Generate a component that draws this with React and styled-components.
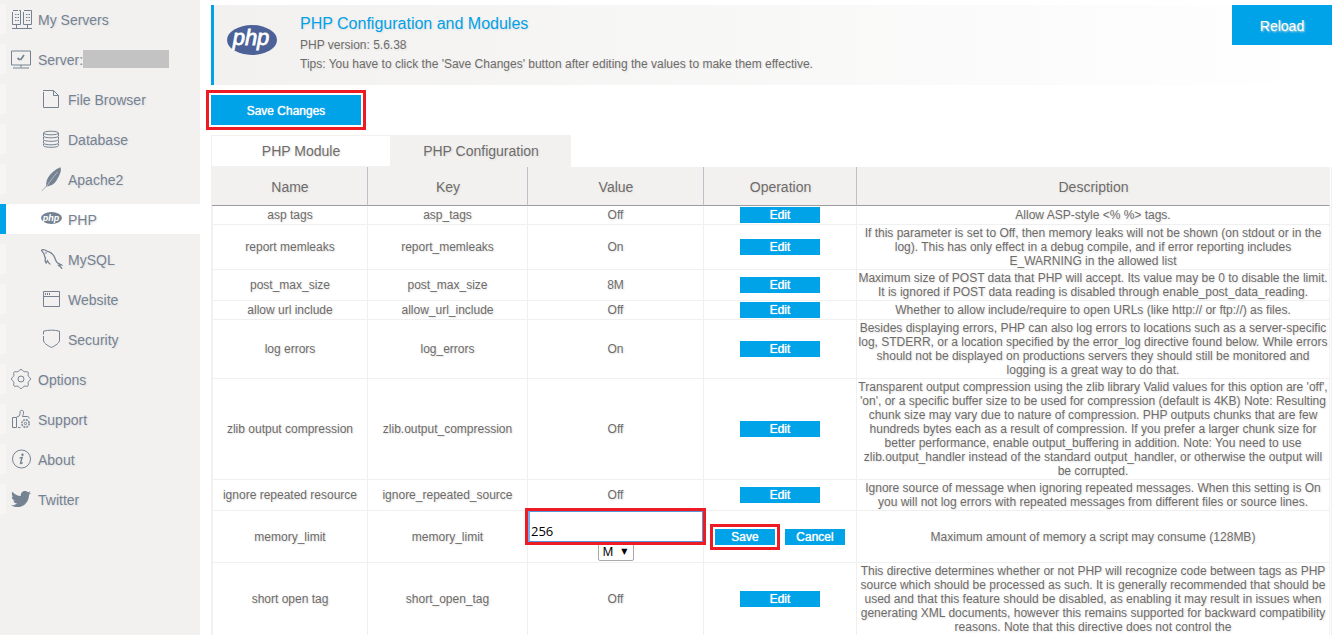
import styled, { createGlobalStyle, css } from "styled-components";
import { useState } from "react";
import { FaTwitter } from "react-icons/fa";

const GlobalStyle = createGlobalStyle`
  * {
    box-sizing: border-box;
  }

  body {
    margin: 0;
    background: #ffffff;
    color: #6e6c69;
    font-family: "Liberation Sans", Arial, sans-serif;
    font-size: 12px;
    line-height: 14px;
    text-shadow: 1px 1px 2px #dddddd;
  }

  button,
  input,
  select {
    margin: 0;
    font-family: inherit;
  }
`;

const highlight = css`
  outline: 3px solid #ed1c24;
  outline-offset: ${({ $tight }) => ($tight ? "0" : "2px")};
`;

const Page = styled.div`
  display: flex;
  height: 100vh;
  overflow: hidden;
`;

const Side = {
  Nav: styled.nav`
    flex: 0 0 200px;
    background: #f2f1f0;
  `,
  List: styled.ul`
    display: flex;
    flex-direction: column;
    gap: 10px;
    margin: 0;
    padding: 4px 0;
    list-style: none;
  `,
  Link: styled.a`
    display: flex;
    align-items: center;
    gap: 7px;
    height: 30px;
    padding-left: ${({ $sub }) => ($sub ? "35px" : "5px")};
    border-left: 6px solid ${({ $active }) => ($active ? "#00a2e8" : "#f6f5f4")};
    background: ${({ $active }) => ($active ? "#ffffff" : "transparent")};
    color: #758292;
    font-size: 14px;
    line-height: 16px;
    text-decoration: none;

    svg {
      flex: none;
      overflow: visible;
      text-shadow: none;
    }
  `,
  Label: styled.span`
    display: flex;
    align-items: center;
    padding-top: 2px;
  `,
  Redacted: styled.span`
    width: 86px;
    height: 18px;
    margin-bottom: 2px;
    background: #c3c3c3;
  `,
};

const Main = styled.main`
  flex: 1;
  min-width: 0;
  padding: 5px 9px 0 11px;
`;

const Banner = {
  Box: styled.header`
    display: flex;
    align-items: flex-start;
    min-height: 80px;
    border-left: 3px solid #00a2e8;
    background: linear-gradient(to right, #f2f1f0, #ffffff);
  `,
  Logo: styled.div`
    display: flex;
    padding: 20px 23px 0 13px;
    text-shadow: none;
  `,
  Text: styled.div`
    flex: 1;

    p {
      margin: 0;
      padding-bottom: 5px;
    }
  `,
  Title: styled.h1`
    margin: 0;
    padding: 9px 0 4px;
    color: #00a2e8;
    font-size: 16px;
    font-weight: 400;
    line-height: 20px;
  `,
};

const Button = styled.button`
  display: block;
  padding: 0;
  border: 0;
  background: #00a2e8;
  color: #ffffff;
  font-size: 12px;
  line-height: 16px;
  text-shadow: 0 0 1px #ffffff;
  cursor: pointer;
`;

const ReloadButton = styled(Button)`
  width: 100px;
  height: 40px;
  padding-top: 2px;
  font-size: 14px;
  text-shadow: 1px 1px 2px #dddddd;
`;

const SaveChangesButton = styled(Button)`
  width: 150px;
  height: 30px;
  margin: 10px 0;
  padding-top: 2px;
  ${highlight}
`;

const RowButton = styled(Button)`
  width: ${({ $small }) => ($small ? "60px" : "80px")};
  height: 16px;
  ${({ $marked }) => $marked && highlight}
`;

const Tabs = styled.div`
  display: flex;
`;

const Tab = styled.button`
  width: 180px;
  height: 32px;
  padding: 0;
  border: 1px solid #f2f1f0;
  background: ${({ $active }) => ($active ? "#f2f1f0" : "#ffffff")};
  color: inherit;
  font-size: 14px;
  text-shadow: inherit;
  cursor: pointer;
`;

const Table = {
  Wrap: styled.div`
    padding-right: 1px;
    border: solid #f2f1f0;
    border-width: 0 1px;
  `,
  Table: styled.table`
    width: 100%;
    border-spacing: 0;
    table-layout: fixed;
    text-align: center;
  `,
  Col: styled.col`
    width: ${({ $width }) => $width};
  `,
  Head: styled.th`
    height: 39px;
    padding: 2px 0 0 1px;
    border-right: 1px solid ${({ $last }) => ($last ? "#f2f1f0" : "#c0bfc8")};
    border-bottom: 1px solid #9c9ca4;
    background: #f2f1f0;
    font-size: 14px;
    font-weight: 400;
  `,
  Cell: styled.td`
    padding: ${({ $flush }) => ($flush ? "0 0 1px" : "1px")};
    border-right: 1px solid #f0f0f0;
    border-bottom: 1px solid #f0f0f0;

    &:first-child {
      border-left: 1px solid #f0f0f0;
    }
  `,
  Actions: styled.div`
    display: flex;
    justify-content: center;
    gap: 10px;
  `,
};

const Editor = {
  Box: styled.div`
    display: flex;
    flex-direction: column;
    align-items: center;
    font-family: "Noto Sans", sans-serif;
  `,
  Input: styled.input`
    position: relative;
    width: 100%;
    height: 31px;
    padding: 8px 1px 0;
    border: 1px solid #5794da;
    border-left: 2px solid #74aef0;
    background: #ffffff;
    color: #000000;
    font-family: "Open Sans", sans-serif;
    font-size: 13px;
    ${highlight}
  `,
  Unit: styled.div`
    display: grid;
    align-items: center;
    width: 36px;
    height: 19px;

    > * {
      grid-area: 1 / 1;
    }
  `,
  Select: styled.select`
    width: 100%;
    height: 19px;
    padding: 0 0 0 4px;
    border: 1px solid #a9a9a9;
    border-radius: 2px;
    background: #ffffff;
    color: #000000;
    font-size: 12px;
    line-height: 16px;
    appearance: none;
  `,
  Arrow: styled.span`
    justify-self: end;
    padding-right: 6px;
    color: #000000;
    font-family: "DejaVu Sans", sans-serif;
    font-size: 8px;
    text-shadow: none;
    pointer-events: none;
  `,
};

function Icon({ width = 20, height = 20, children }) {
  return (
    <svg
      width={width}
      height={height}
      viewBox={`0 0 ${width} ${height}`}
      fill="none"
      stroke="currentColor"
      aria-hidden="true"
    >
      {children}
    </svg>
  );
}

const ServersIcon = () => (
  <Icon>
    <path d="M2 1.500h5M8 1.500h1.500v14M1.500 3v12.500h8M13 1.500h7.500v14M12.500 3v12.500h8M5.500 16v3M16.500 16v3M1 19.500h20" />
    <path d="M4 5.500h4M4 8.500h4M4 11.500h4M15 5.500h4M15 8.500h4M15 11.500h4" strokeDasharray="1.500 1" />
  </Icon>
);

const MonitorIcon = () => (
  <Icon>
    <path d="M.5 2h19v14H.5zM10 16v2.500M2 19h16" />
    <path d="m6.500 9 2.500 2M9.500 11 13 6" strokeWidth="1.700" />
  </Icon>
);

const FileIcon = () => (
  <Icon>
    <path d="M2 1.500h10.500l5 5v12h-15V3M12.500 1.500v5h5" />
  </Icon>
);

const DatabaseIcon = () => (
  <Icon>
    <ellipse cx="10" cy="4" rx="7.500" ry="1.800" />
    <path d="M2.500 4v3c0 2.400 15 2.400 15 0V4M2.500 8v2.500c0 2.400 15 2.400 15 0V8M2.500 11.500V14c0 2.400 15 2.400 15 0v-2.500M2.500 15v1.500c0 2.400 15 2.400 15 0V15" />
  </Icon>
);

const FeatherIcon = () => (
  <Icon height={24}>
    <path
      d="M19.500.2c.8 2.300.3 4.600-.7 6.800-.6 2-1.700 3.500-2.600 5.300-.8 1.700-2.200 3.500-3.900 4.700-1.800 1.300-4 2.200-7 2.500-.3-3.500.2-6.800 2.300-9.800C10.200 6.200 14 2.200 19.500.2z"
      fill="currentColor"
      stroke="none"
    />
    <path d="M6 18.500C4.500 20 3 22 .8 23.800" opacity=".6" />
    <path d="M16.500 5C12.500 10 9 14 6 19" stroke="#f2f1f0" strokeWidth=".5" />
  </Icon>
);

const PhpIcon = () => (
  <Icon height={14}>
    <ellipse cx="10.500" cy="6" rx="10.500" ry="6" fill="currentColor" stroke="none" />
    <text
      x="10"
      y="8.500"
      fill="#ffffff"
      stroke="none"
      fontFamily="Liberation Sans"
      fontSize="9"
      fontStyle="italic"
      fontWeight="700"
      textAnchor="middle"
    >
      php
    </text>
  </Icon>
);

const DolphinIcon = () => (
  <Icon>
    <path
      d="M.5.8c2-.4 3.900.2 5.200 1.300 3.600.6 6 2.700 7.600 5.600 1 2 1.500 4 2.500 5.500 1 1.300 3 1.600 4.700 2.800l-3 .2c1.200 1.200 2.800 2 3.600 3.600"
      strokeWidth="1.300"
    />
    <path
      d="M.5.800c.2 1.700 1.900 2.700 2.500 4 .4 1.500.5 3 1.500 4.200-.6 1.700-.3 3.500.6 5l1.300-2.200c.8 1.700 1.600 2.900 3 3.600M4.500 3.500l1 1"
      strokeWidth="1.300"
    />
  </Icon>
);

const WebsiteIcon = () => (
  <Icon>
    <path d="M2.500 2.500h16v15h-16zM2.500 7.500h16" />
    <path d="M4.500 4v2M6.500 4v2M8.500 4v2" />
  </Icon>
);

const ShieldIcon = () => (
  <Icon>
    <path d="M2.500 5.500V2.200C8 .8 13 .8 18.500 2.200V11c0 3-3.500 5.200-8 7.500-4.500-2.300-8-4.500-8-7.500V7" />
  </Icon>
);

const GearIcon = () => (
  <Icon>
    <circle cx="10" cy="10" r="3" />
    <path d="M10 .5c1.600 0 1.700 1.700 3.200 2.200 1.400.4 2.800-.7 3.700.4 1.100 1-.1 2.300.3 3.700.5 1.500 2.300 1.600 2.300 3.200s-1.800 1.700-2.300 3.200c-.4 1.400.8 2.700-.3 3.700-.9 1.100-2.300-.1-3.700.3-1.500.5-1.600 2.300-3.200 2.300s-1.700-1.800-3.200-2.300c-1.400-.4-2.800.8-3.700-.3-1.100-1 .1-2.300-.3-3.700C2.300 11.700.5 11.600.5 10s1.800-1.700 2.300-3.200c.4-1.400-.8-2.700.3-3.700.9-1.100 2.300 0 3.700-.4C8.300 2.200 8.400.5 10 .5z" />
  </Icon>
);

const SupportIcon = () => (
  <Icon>
    <path d="M1.500 8.500h4v10h-4zM5.500 8c2-.3 3.500-1 3.500-3.500V3c0-2.300 3.300-2.300 3.500 0 .2 2-.5 3-1 4.500h5c1.200 0 1.700.8 1.500 2M7 18.500h2.500" />
    <circle cx="14.500" cy="14.500" r="3.700" strokeDasharray="2 .9" strokeWidth="1.400" />
    <circle cx="14.500" cy="14.500" r="1.200" />
  </Icon>
);

const AboutIcon = () => (
  <Icon>
    <circle cx="10.500" cy="10" r="9" />
    <circle cx="11.500" cy="5.800" r="1.200" fill="currentColor" stroke="none" />
    <path d="M8.500 9.200c1-.6 2-.9 2.700-.9L9.500 14c-.2 1 .7.8 2.200-.5" strokeWidth="1.300" />
  </Icon>
);

const PhpLogo = () => (
  <svg width="50" height="30" viewBox="0 0 50 30" role="img" aria-label="php">
    <ellipse cx="25" cy="15" rx="25" ry="15" fill="#4b6197" />
    <text
      x="24"
      y="20"
      fill="#ffffff"
      stroke="#ffffff"
      strokeWidth=".8"
      fontFamily="Liberation Sans"
      fontSize="22"
      fontStyle="italic"
      textAnchor="middle"
    >
      php
    </text>
  </svg>
);

const menu = [
  { label: "My Servers", icon: <ServersIcon /> },
  { label: "Server:", icon: <MonitorIcon />, redacted: true },
  { label: "File Browser", icon: <FileIcon />, sub: true },
  { label: "Database", icon: <DatabaseIcon />, sub: true },
  { label: "Apache2", icon: <FeatherIcon />, sub: true },
  { label: "PHP", icon: <PhpIcon />, sub: true, active: true },
  { label: "MySQL", icon: <DolphinIcon />, sub: true },
  { label: "Website", icon: <WebsiteIcon />, sub: true },
  { label: "Security", icon: <ShieldIcon />, sub: true },
  { label: "Options", icon: <GearIcon /> },
  { label: "Support", icon: <SupportIcon /> },
  { label: "About", icon: <AboutIcon /> },
  { label: "Twitter", icon: <FaTwitter size={20} /> },
];

const columns = [
  { title: "Name", width: "156px" },
  { title: "Key", width: "160px" },
  { title: "Value", width: "176px" },
  { title: "Operation", width: "153px" },
  { title: "Description", width: "auto" },
];

const settings = [
  {
    name: "asp tags",
    key: "asp_tags",
    value: "Off",
    description: "Allow ASP-style <% %> tags.",
  },
  {
    name: "report memleaks",
    key: "report_memleaks",
    value: "On",
    description:
      "If this parameter is set to Off, then memory leaks will not be shown (on stdout or in the log). This has only effect in a debug compile, and if error reporting includes E_WARNING in the allowed list",
  },
  {
    name: "post_max_size",
    key: "post_max_size",
    value: "8M",
    description:
      "Maximum size of POST data that PHP will accept. Its value may be 0 to disable the limit. It is ignored if POST data reading is disabled through enable_post_data_reading.",
  },
  {
    name: "allow url include",
    key: "allow_url_include",
    value: "Off",
    description:
      "Whether to allow include/require to open URLs (like http:// or ftp://) as files.",
  },
  {
    name: "log errors",
    key: "log_errors",
    value: "On",
    description:
      "Besides displaying errors, PHP can also log errors to locations such as a server-specific log, STDERR, or a location specified by the error_log directive found below. While errors should not be displayed on productions servers they should still be monitored and logging is a great way to do that.",
  },
  {
    name: "zlib output compression",
    key: "zlib.output_compression",
    value: "Off",
    description:
      "Transparent output compression using the zlib library Valid values for this option are 'off', 'on', or a specific buffer size to be used for compression (default is 4KB) Note: Resulting chunk size may vary due to nature of compression. PHP outputs chunks that are few hundreds bytes each as a result of compression. If you prefer a larger chunk size for better performance, enable output_buffering in addition. Note: You need to use zlib.output_handler instead of the standard output_handler, or otherwise the output will be corrupted.",
  },
  {
    name: "ignore repeated resource",
    key: "ignore_repeated_source",
    value: "Off",
    description:
      "Ignore source of message when ignoring repeated messages. When this setting is On you will not log errors with repeated messages from different files or source lines.",
  },
  {
    name: "memory_limit",
    key: "memory_limit",
    value: "256",
    editing: true,
    description: "Maximum amount of memory a script may consume (128MB)",
  },
  {
    name: "short open tag",
    key: "short_open_tag",
    value: "Off",
    description:
      "This directive determines whether or not PHP will recognize code between tags as PHP source which should be processed as such. It is generally recommended that should be used and that this feature should be disabled, as enabling it may result in issues when generating XML documents, however this remains supported for backward compatibility reasons. Note that this directive does not control the",
  },
];

function Sidebar() {
  return (
    <Side.Nav>
      <Side.List>
        {menu.map(({ label, icon, sub, active, redacted }) => (
          <li key={label}>
            <Side.Link
              href="#"
              $sub={sub}
              $active={active}
              aria-current={active ? "page" : undefined}
            >
              {icon}
              <Side.Label>
                {label}
                {redacted && <Side.Redacted />}
              </Side.Label>
            </Side.Link>
          </li>
        ))}
      </Side.List>
    </Side.Nav>
  );
}

function ValueEditor({ name, initialValue }) {
  const [value, setValue] = useState(initialValue);
  const [unit, setUnit] = useState("M");
  return (
    <Editor.Box>
      <Editor.Input
        $tight
        type="text"
        aria-label={name}
        value={value}
        onChange={(e) => setValue(e.target.value)}
      />
      <Editor.Unit>
        <Editor.Select
          aria-label={`${name} unit`}
          value={unit}
          onChange={(e) => setUnit(e.target.value)}
        >
          <option>K</option>
          <option>M</option>
          <option>G</option>
        </Editor.Select>
        <Editor.Arrow aria-hidden="true">▼</Editor.Arrow>
      </Editor.Unit>
    </Editor.Box>
  );
}

function SettingRow({ setting }) {
  const { name, key, value, editing, description } = setting;
  return (
    <tr>
      <Table.Cell>{name}</Table.Cell>
      <Table.Cell>{key}</Table.Cell>
      <Table.Cell $flush={editing}>
        {editing ? <ValueEditor name={name} initialValue={value} /> : value}
      </Table.Cell>
      <Table.Cell>
        <Table.Actions>
          {editing ? (
            <>
              <RowButton $small $marked>
                Save
              </RowButton>
              <RowButton $small>Cancel</RowButton>
            </>
          ) : (
            <RowButton>Edit</RowButton>
          )}
        </Table.Actions>
      </Table.Cell>
      <Table.Cell>{description}</Table.Cell>
    </tr>
  );
}

function App() {
  return (
    <>
      <GlobalStyle />
      <Page>
        <Sidebar />
        <Main>
          <Banner.Box>
            <Banner.Logo>
              <PhpLogo />
            </Banner.Logo>
            <Banner.Text>
              <Banner.Title>PHP Configuration and Modules</Banner.Title>
              <p>PHP version: 5.6.38</p>
              <p>
                Tips: You have to click the 'Save Changes' button after editing
                the values to make them effective.
              </p>
            </Banner.Text>
            <ReloadButton>Reload</ReloadButton>
          </Banner.Box>

          <SaveChangesButton>Save Changes</SaveChangesButton>

          <Tabs role="tablist">
            <Tab role="tab" aria-selected="false">
              PHP Module
            </Tab>
            <Tab role="tab" aria-selected="true" $active>
              PHP Configuration
            </Tab>
          </Tabs>
          <Table.Wrap>
            <Table.Table>
              <colgroup>
                {columns.map(({ title, width }) => (
                  <Table.Col key={title} $width={width} />
                ))}
              </colgroup>
              <thead>
                <tr>
                  {columns.map(({ title }, index) => (
                    <Table.Head
                      key={title}
                      scope="col"
                      $last={index === columns.length - 1}
                    >
                      {title}
                    </Table.Head>
                  ))}
                </tr>
              </thead>
              <tbody>
                {settings.map((setting) => (
                  <SettingRow key={setting.key} setting={setting} />
                ))}
              </tbody>
            </Table.Table>
          </Table.Wrap>
        </Main>
      </Page>
    </>
  );
}

export default App;
